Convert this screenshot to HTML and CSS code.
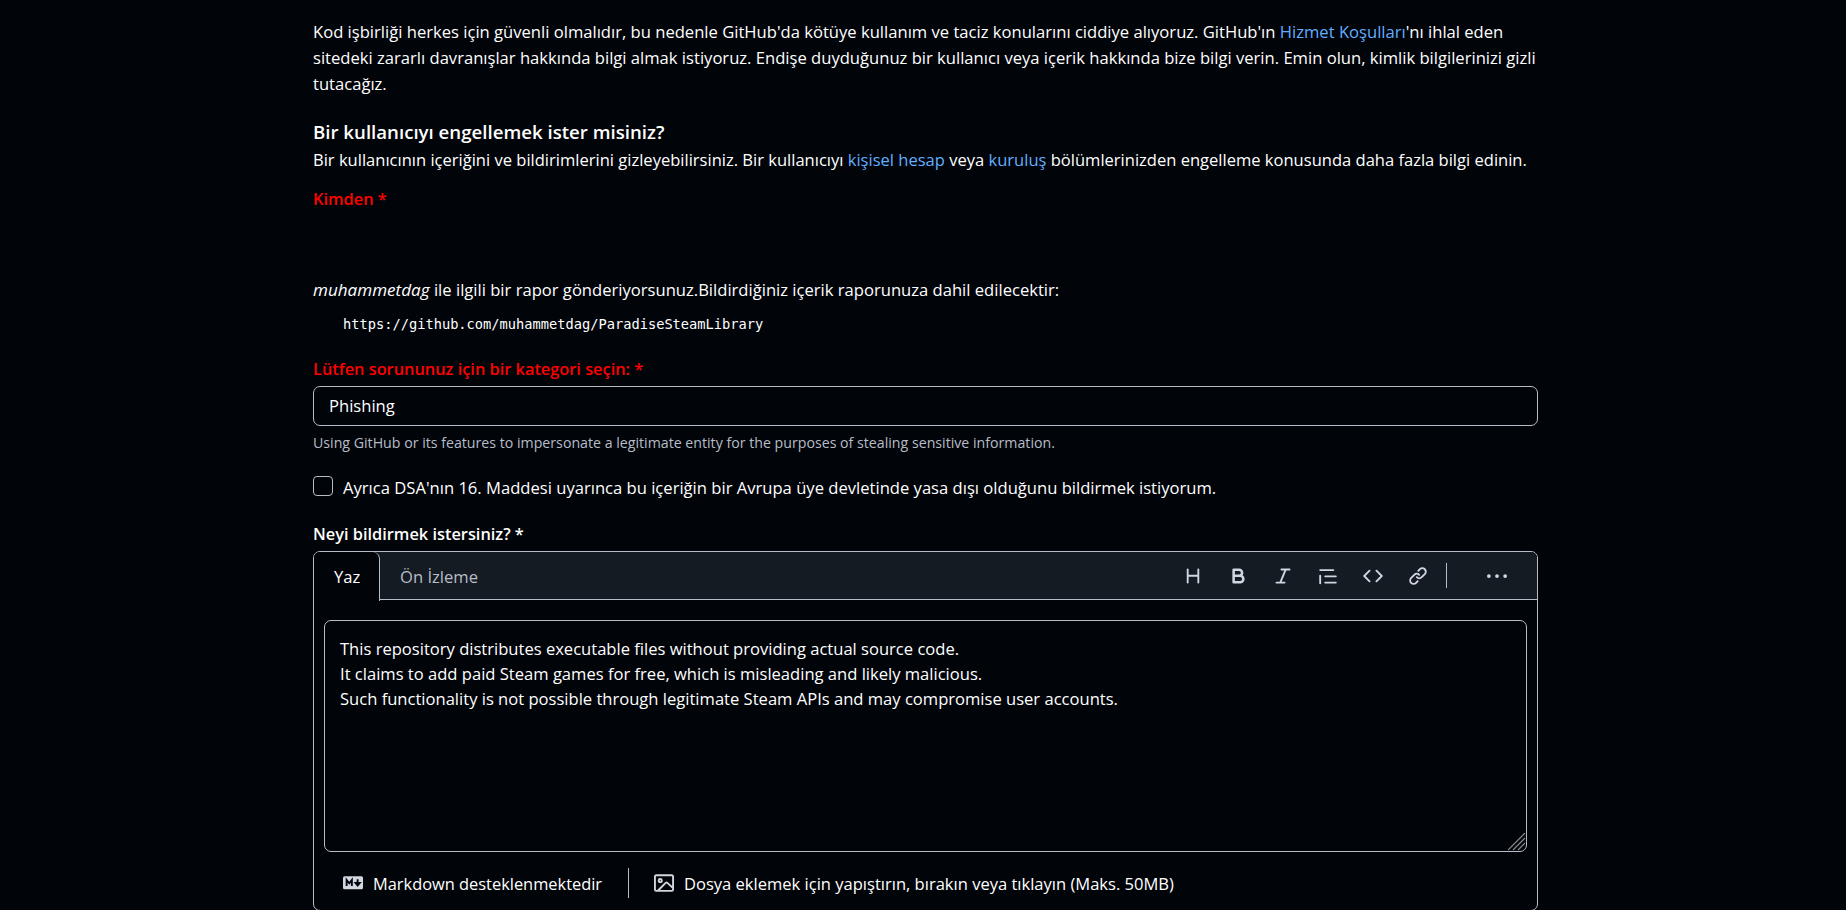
FILE: index.html
```html
<!DOCTYPE html>
<html lang="tr">
<head>
  <meta charset="UTF-8">
  <title>Kötüye kullanım bildir</title>
  <link rel="stylesheet" href="styles.css">
</head>
<body>

<div class="container">
  <p class="intro">
    Kod işbirliği herkes için güvenli olmalıdır, bu nedenle GitHub'da kötüye kullanım ve taciz konularını ciddiye alıyoruz. GitHub'ın <a href="#">Hizmet Koşulları</a>'nı ihlal eden<br>
    sitedeki zararlı davranışlar hakkında bilgi almak istiyoruz. Endişe duyduğunuz bir kullanıcı veya içerik hakkında bize bilgi verin. Emin olun, kimlik bilgilerinizi gizli<br>
    tutacağız.
  </p>

  <h3>Bir kullanıcıyı engellemek ister misiniz?</h3>
  <p class="block-info">Bir kullanıcının içeriğini ve bildirimlerini gizleyebilirsiniz. Bir kullanıcıyı <a href="#">kişisel hesap</a> veya <a href="#">kuruluş</a> bölümlerinizden engelleme konusunda daha fazla bilgi edinin.</p>

  <form>
    <div class="label required from">Kimden *</div>

    <p class="report-text"><em>muhammetdag</em> ile ilgili bir rapor gönderiyorsunuz.Bildirdiğiniz içerik raporunuza dahil edilecektir:</p>
    <div class="report-url">https://github.com/muhammetdag/ParadiseSteamLibrary</div>

    <div class="label required">Lütfen sorununuz için bir kategori seçin: *</div>
    <div class="select">Phishing</div>
    <p class="note">Using GitHub or its features to impersonate a legitimate entity for the purposes of stealing sensitive information.</p>

    <label class="check-row">
      <input type="checkbox" class="checkbox">
      <span>Ayrıca DSA'nın 16. Maddesi uyarınca bu içeriğin bir Avrupa üye devletinde yasa dışı olduğunu bildirmek istiyorum.</span>
    </label>

    <div class="label">Neyi bildirmek istersiniz? *</div>

    <div class="editor">
      <div class="editor-header">
        <div class="tab active">Yaz</div>
        <div class="tab">Ön İzleme</div>

        <div class="toolbar">
          <!-- heading -->
          <svg class="icon stroke" viewBox="0 0 16 16"><path d="M3.75 2.75v10.5M12.25 2.75v10.5M3.75 7.75h8.5"/></svg>
          <!-- bold -->
          <svg class="icon stroke bold" viewBox="0 0 16 16"><path d="M4.5 3h4.4a2.4 2.4 0 0 1 0 4.8H4.5zM4.5 7.8h5.2a2.6 2.6 0 0 1 0 5.2H4.5z"/></svg>
          <!-- italic -->
          <svg class="icon stroke" viewBox="0 0 16 16"><path d="M6.75 2.75h6.5M2.75 13.25h6.5M10.2 2.75L5.8 13.25"/></svg>
          <!-- quote -->
          <svg class="icon" viewBox="0 0 16 16"><path d="M1.75 2.5h10.5a.75.75 0 0 1 0 1.5H1.75a.75.75 0 0 1 0-1.5Zm4 5h8.5a.75.75 0 0 1 0 1.5h-8.5a.75.75 0 0 1 0-1.5Zm0 5h8.5a.75.75 0 0 1 0 1.5h-8.5a.75.75 0 0 1 0-1.5ZM2.5 7.75v6a.75.75 0 0 1-1.5 0v-6a.75.75 0 0 1 1.5 0Z"/></svg>
          <!-- code -->
          <svg class="icon" viewBox="0 0 16 16"><path d="m11.28 3.22 4.25 4.25a.75.75 0 0 1 0 1.06l-4.25 4.25a.749.749 0 0 1-1.275-.326.749.749 0 0 1 .215-.734L13.94 8l-3.72-3.72a.749.749 0 0 1 .326-1.275.749.749 0 0 1 .734.215Zm-6.56 0a.751.751 0 0 1 1.042.018.751.751 0 0 1 .018 1.042L2.06 8l3.72 3.72a.749.749 0 0 1-.326 1.275.749.749 0 0 1-.734-.215L.47 8.53a.75.75 0 0 1 0-1.06Z"/></svg>
          <!-- link -->
          <svg class="icon" viewBox="0 0 16 16"><path d="m7.775 3.275 1.25-1.25a3.5 3.5 0 1 1 4.95 4.95l-2.5 2.5a3.5 3.5 0 0 1-4.95 0 .751.751 0 0 1 .018-1.042.751.751 0 0 1 1.042-.018 1.998 1.998 0 0 0 2.83 0l2.5-2.5a2.002 2.002 0 0 0-2.83-2.83l-1.25 1.25a.751.751 0 0 1-1.042-.018.751.751 0 0 1-.018-1.042Zm-4.69 9.64a1.998 1.998 0 0 0 2.83 0l1.25-1.25a.751.751 0 0 1 1.042.018.751.751 0 0 1 .018 1.042l-1.25 1.25a3.5 3.5 0 1 1-4.95-4.95l2.5-2.5a3.5 3.5 0 0 1 4.95 0 .751.751 0 0 1-.018 1.042.751.751 0 0 1-1.042.018 1.998 1.998 0 0 0-2.83 0l-2.5 2.5a1.998 1.998 0 0 0 0 2.83Z"/></svg>
          <span class="divider"></span>
          <!-- more -->
          <svg class="icon more" viewBox="0 0 16 16"><circle cx="1.5" cy="8" r="1.5"/><circle cx="8" cy="8" r="1.5"/><circle cx="14.5" cy="8" r="1.5"/></svg>
        </div>
      </div>

      <div class="textarea-wrap">
        <textarea spellcheck="false">This repository distributes executable files without providing actual source code.
It claims to add paid Steam games for free, which is misleading and likely malicious.
Such functionality is not possible through legitimate Steam APIs and may compromise user accounts.</textarea>
        <svg class="grip" viewBox="0 0 18 18"><path d="M0 17L17 0M5 17L17 5M10 17L17 10"/></svg>
      </div>

      <div class="editor-footer">
        <svg class="icon" viewBox="0 0 16 16"><rect y="2.6" width="16" height="10.4" rx="1.2"/><path class="cut" d="M2.9 10.4V5.6l2.1 2.6 2.1-2.6v4.8"/><path class="cut" d="M11.7 5v3.6M10 8l1.7 2 1.7-2z"/></svg>
        <span class="markdown">Markdown desteklenmektedir</span>
        <span class="footer-divider"></span>
        <svg class="icon" viewBox="0 0 16 16"><path d="M16 13.25A1.75 1.75 0 0 1 14.25 15H1.75A1.75 1.75 0 0 1 0 13.25V2.75C0 1.784.784 1 1.75 1h12.5c.966 0 1.75.784 1.75 1.75ZM1.75 2.5a.25.25 0 0 0-.25.25v10.5c0 .138.112.25.25.25h.94l.03-.03 6.077-6.078a1.75 1.75 0 0 1 2.412-.06L14.5 10.31V2.75a.25.25 0 0 0-.25-.25Zm12.5 11a.25.25 0 0 0 .25-.25v-.917l-4.298-3.889a.25.25 0 0 0-.344.009L4.81 13.5ZM7 6a2 2 0 1 1-3.999.001A2 2 0 0 1 7 6ZM5.5 6a.5.5 0 1 0-1 0 .5.5 0 0 0 1 0Z"/></svg>
        <span class="attach">Dosya eklemek için yapıştırın, bırakın veya tıklayın (Maks. 50MB)</span>
      </div>
    </div>
  </form>
</div>

</body>
</html>
```
FILE: styles.css
```css
* {
  box-sizing: border-box;
}

body {
  margin: 0;
  height: 910px;
  overflow: hidden;
  background: #010409;
  color: #fff;
  font-family: 'Segoe UI', 'Open Sans', sans-serif;
  font-size: 16.6px;
  line-height: 26px;
}

.container {
  width: 1225px;
  margin-left: 313px;
  padding-top: 19px;
  white-space: nowrap;
}

p {
  margin: 0;
}

a {
  color: #62aeff;
  text-decoration: none;
}

h3 {
  margin: 20px 0 0;
  font-size: 18.65px;
  font-weight: 600;
  line-height: 30px;
}

.block-info {
  font-size: 16.55px;
}

.label {
  font-size: 16.35px;
  font-weight: 600;
}

.required {
  color: #ff0000;
}

.from {
  margin-top: 13px;
  margin-bottom: 65px;
}

.report-text em {
  font-size: 17.1px;
}

.report-url {
  margin: 8px 0 19px 30px;
  font-family: Consolas, 'DejaVu Sans Mono', monospace;
  font-size: 13.7px;
  line-height: 26px;
}

.select {
  height: 40px;
  margin-top: 4px;
  padding-left: 15px;
  border: 1px solid #b7bdc8;
  border-radius: 7px;
  line-height: 38px;
}

.note {
  margin-top: 4px;
  font-size: 14.18px;
  color: #b7bdc8;
}

.check-row {
  display: flex;
  gap: 10px;
  margin: 19px 0 20px;
}

.checkbox {
  appearance: none;
  width: 20px;
  height: 20px;
  margin: 1px 0 0;
  border: 1px solid #b7bdc8;
  border-radius: 4px;
}

.editor {
  height: 360px;
  margin-top: 4px;
  border: 1px solid #b7bdc8;
  border-radius: 7px;
}

.editor-header {
  display: flex;
  height: 48px;
  background: #151b23;
  border-bottom: 1px solid #b7bdc8;
  border-radius: 6px 6px 0 0;
}

.tab {
  height: 47px;
  padding: 0 20px;
  line-height: 50px;
  color: #b7bdc8;
}

.tab.active {
  width: 66px;
  height: 49px;
  background: #010409;
  color: #fff;
  border-right: 1px solid #b7bdc8;
  border-radius: 6px 7px 0 0;
}

.toolbar {
  display: flex;
  align-items: center;
  gap: 25px;
  margin-left: auto;
  margin-right: 30px;
}

.icon {
  width: 20px;
  height: 20px;
  fill: #d1d7e0;
}

.stroke {
  fill: none;
  stroke: #d1d7e0;
  stroke-width: 1.5;
  stroke-linecap: round;
  stroke-linejoin: round;
}

.bold {
  stroke-width: 2;
}

.divider {
  width: 1px;
  height: 25px;
  margin-left: -7px;
  background: #b7bdc8;
}

.more {
  margin-left: 15px;
}

.textarea-wrap {
  position: relative;
  margin: 20px 10px 0;
}

textarea {
  display: block;
  width: 100%;
  height: 232px;
  padding: 15px;
  background: #010409;
  color: #fff;
  border: 1px solid #b7bdc8;
  border-radius: 7px;
  font-family: inherit;
  font-size: 16.57px;
  line-height: 25px;
  resize: none;
  overflow: hidden;
}

/* resize handle */
.grip {
  position: absolute;
  right: 1px;
  bottom: 1px;
  width: 18px;
  height: 18px;
  fill: none;
  stroke: #8b8b8b;
  stroke-width: 1.2;
}

.editor-footer {
  display: flex;
  align-items: center;
  gap: 10px;
  height: 60px;
  padding: 2px 0 0 29px;
}

.markdown {
  width: 230px;
  padding-top: 1px;
  font-size: 16.4px;
}

.attach {
  padding-top: 1px;
  font-size: 16.55px;
}

.cut {
  fill: none;
  stroke: #010409;
  stroke-width: 1.5;
}

.footer-divider {
  width: 1px;
  height: 30px;
  margin: 0 15px;
  background: #b7bdc8;
}
```
